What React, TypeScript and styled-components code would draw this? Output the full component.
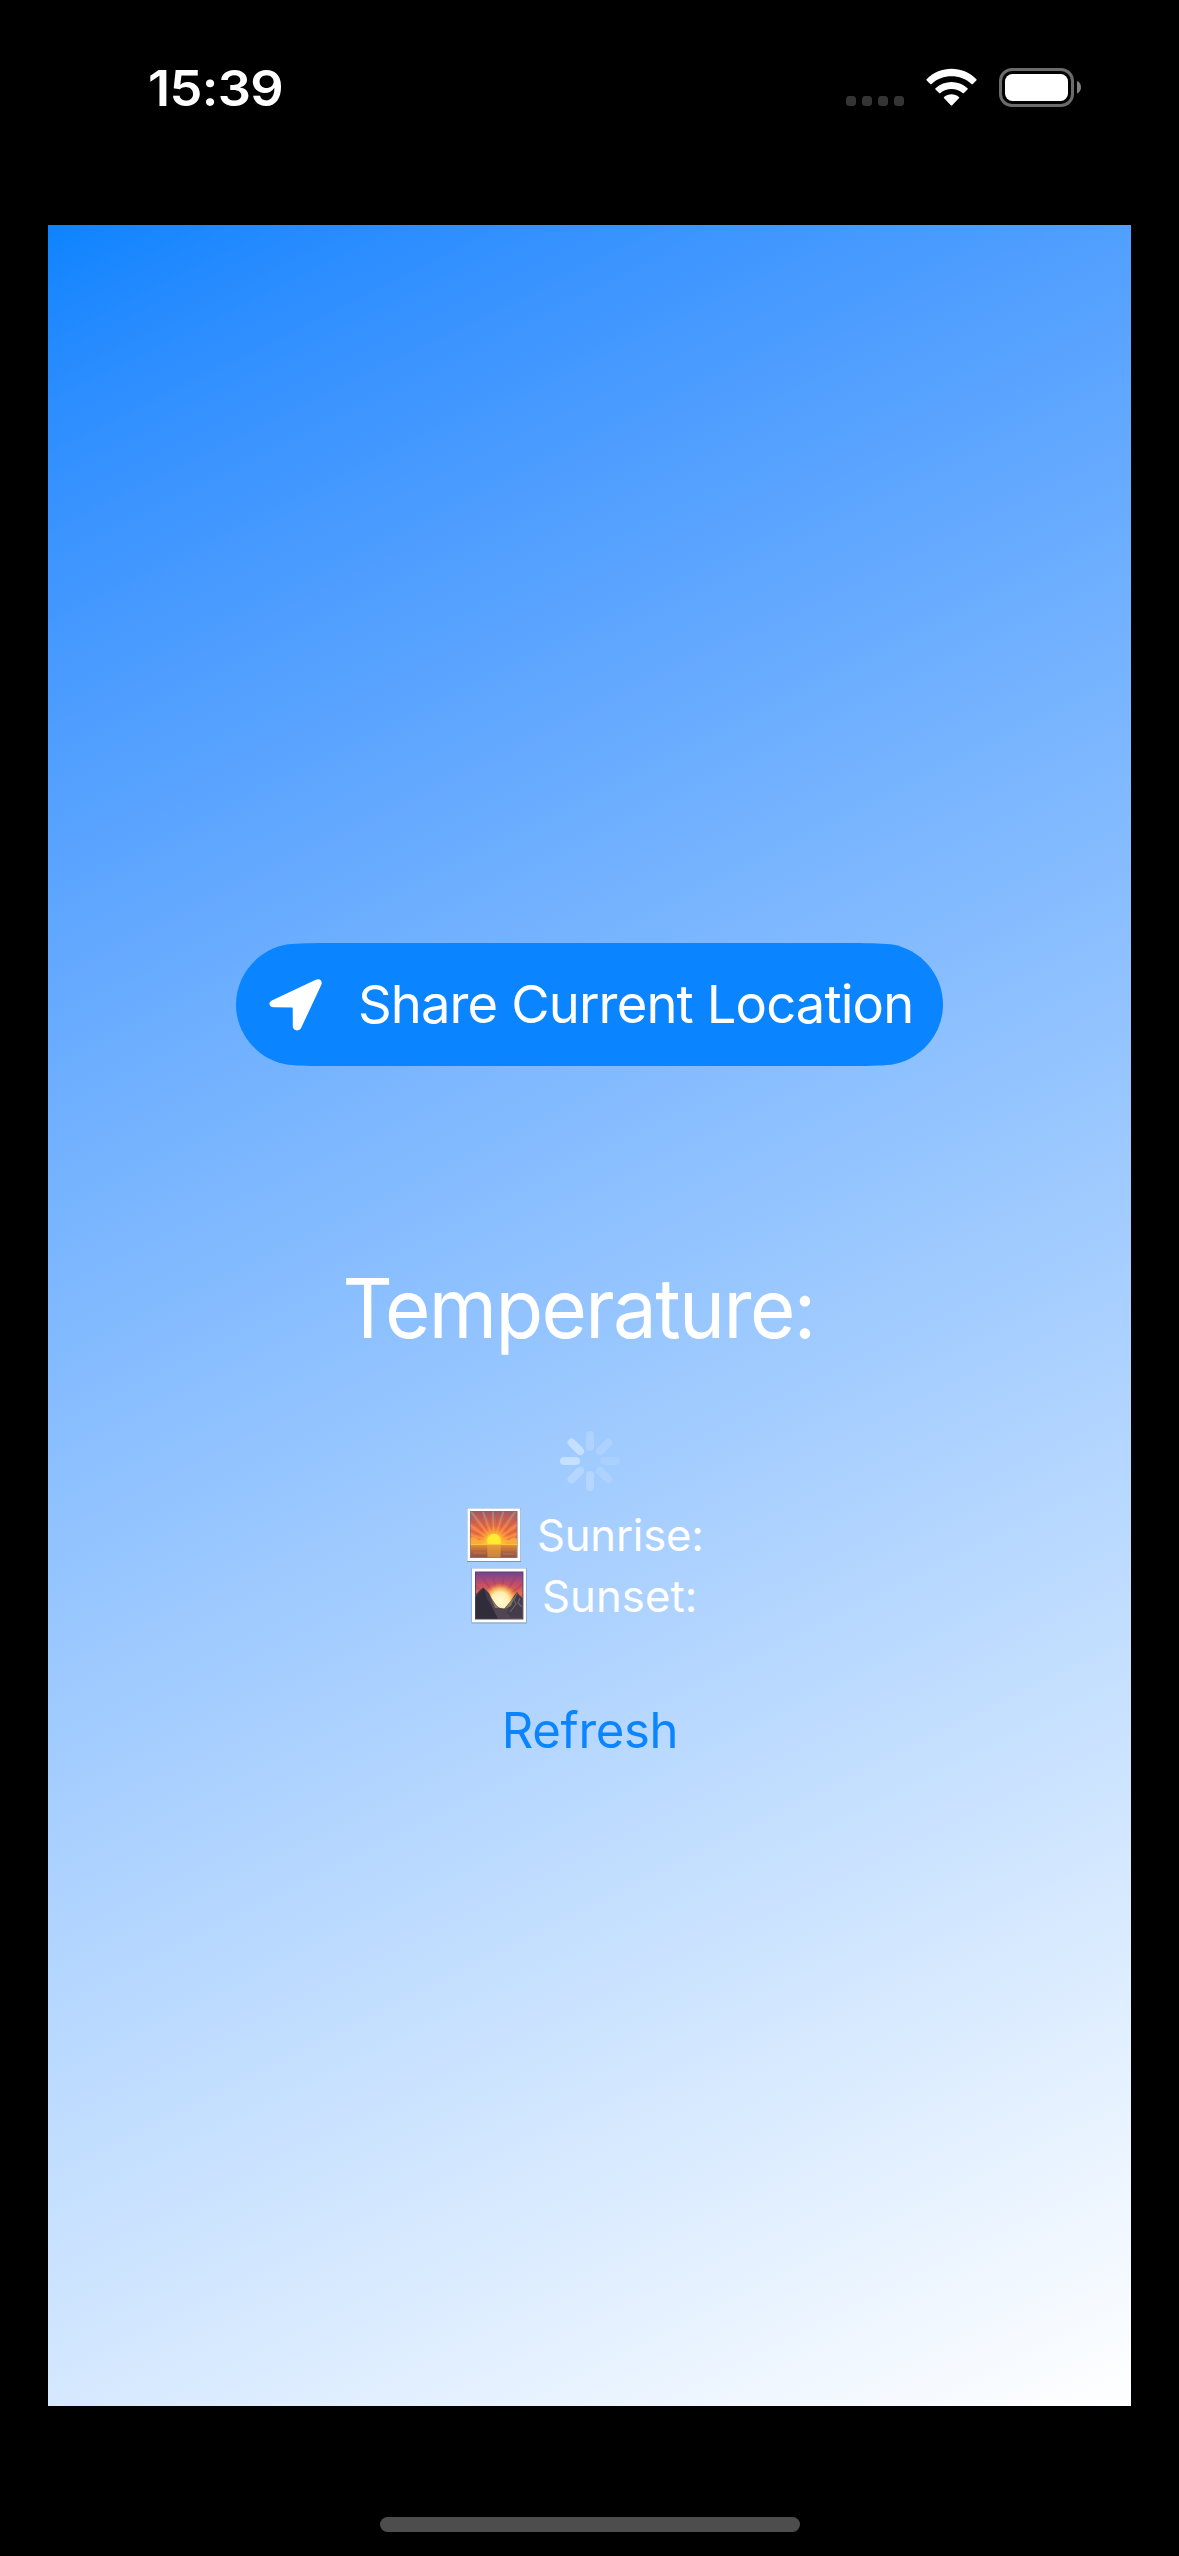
import React from "react";
import styled, { createGlobalStyle } from "styled-components";

const GlobalStyle = createGlobalStyle`
  * { box-sizing: border-box; }
  body { margin: 0; background: #000; }
`;

const Screen = styled.div`
  width: 1179px;
  height: 2556px;
  display: flex;
  flex-direction: column;
  align-items: center;
  background: #000;
  color: #fff;
  font-family: Inter, "Liberation Sans", sans-serif;
  overflow: hidden;
`;

const StatusBar = styled.header`
  width: 100%;
  height: 225px;
  padding: 58px 98px 0 148px;
  display: flex;
  justify-content: space-between;
  align-items: flex-start;
`;

const Clock = styled.time`
  font-size: 50px;
  font-weight: 600;
  line-height: 60px;
  letter-spacing: -0.6px;
  transform: scaleX(1.045);
  transform-origin: left center;
`;

const StatusIcons = styled.div`
  display: flex;
  align-items: flex-start;
  padding-top: 10px;
`;

const Dots = styled.div`
  display: flex;
  gap: 6px;
  padding-top: 28px;
  margin-right: 22px;
`;

const Dot = styled.span`
  width: 10px;
  height: 10px;
  border-radius: 3.5px;
  background: #343434;
`;

const WifiIcon = styled.svg`
  width: 51px;
  height: 39px;
  margin-right: 22px;
`;

const BatteryIcon = styled.svg`
  width: 82px;
  height: 39px;
`;

const Panel = styled.main`
  width: 1083px;
  height: 2181px;
  padding-top: 718px;
  display: flex;
  flex-direction: column;
  align-items: center;
  background: linear-gradient(153.594deg in oklab, #0a84ff, #ffffff);
`;

const ShareButton = styled.button`
  width: 707px;
  height: 123px;
  padding: 0 0 0 33px;
  border: 0;
  display: flex;
  align-items: center;
  background: #0a84ff;
  color: #fff;
  font-family: inherit;
  font-size: 52.5px;
  line-height: 64px;
  letter-spacing: -0.87px;
  white-space: nowrap;
  clip-path: path("M95 0 C78 0 62 .3 52 1.3 C22.5 5.8 0 31.5 0 61.5 C0 91.5 22.5 117.2 52 121.7 C62 122.7 78 123 95 123 H612 C629 123 645 122.7 655 121.7 C684.5 117.2 707 91.5 707 61.5 C707 31.5 684.5 5.8 655 1.3 C645 .3 629 0 612 0 Z");
`;

const ShareLabel = styled.span`
  padding-bottom: 2px;
`;

const ArrowIcon = styled.svg`
  width: 54px;
  height: 54px;
  margin-right: 35px;
  flex: none;
`;

const Temperature = styled.h1`
  margin: 193px 22px 0 0;
  font-size: 82px;
  font-weight: 400;
  line-height: 100px;
  letter-spacing: -1.7px;
  transform: scaleX(0.95);
`;

const Spinner = styled.svg`
  width: 60px;
  height: 60px;
  margin-top: 72px;
`;

const SunTimes = styled.section`
  margin-top: 14px;
  display: flex;
  flex-direction: column;
`;

const SunRow = styled.div<{ $indent: number; $tracking: number }>`
  height: 61px;
  display: flex;
  align-items: center;
  padding-left: ${(p) => p.$indent}px;
  width: 247px;
  font-size: 43.6px;
  line-height: 61px;
  letter-spacing: ${(p) => p.$tracking}px;
  white-space: nowrap;
`;

const SunPicture = styled.svg`
  width: 56px;
  height: 57px;
  flex: none;
  margin: 0 15px 2px 0;
`;

const Refresh = styled.button`
  height: 62px;
  margin: 73px 0 0 1px;
  padding: 0;
  border: 0;
  background: none;
  color: #0a84ff;
  font-family: inherit;
  font-size: 49px;
  line-height: 62px;
  letter-spacing: -0.3px;
`;

const HomeIndicator = styled.div`
  width: 420px;
  height: 15px;
  margin-top: 111px;
  border-radius: 8px;
  background: #4d4d4d;
`;

const spokeOpacities = [0.17, 0.14, 0.1, 0.13, 0.2, 0.22, 0.4, 0.4];

const sunriseRays = [-82, -64, -46, -29, -11, 8, 26, 44, 62, 81];
const sunsetRays = [-66, -44, -24, 0, 24, 44, 66];

function SunrisePicture() {
  return (
    <SunPicture viewBox="0 0 56 57" aria-hidden="true">
      <defs>
        <linearGradient id="riseSky" x1="0" y1="0" x2="0" y2="1">
          <stop offset="0" stopColor="#8a5c78" />
          <stop offset=".35" stopColor="#ea7548" />
          <stop offset="1" stopColor="#ff9a3a" />
        </linearGradient>
        <linearGradient id="riseSea" x1="0" y1="0" x2="0" y2="1">
          <stop offset="0" stopColor="#e69a35" />
          <stop offset=".5" stopColor="#b9673f" />
          <stop offset="1" stopColor="#8c5450" />
        </linearGradient>
        <radialGradient id="riseGlow">
          <stop offset="0" stopColor="#fff23a" />
          <stop offset=".4" stopColor="#ffd02e" stopOpacity=".9" />
          <stop offset="1" stopColor="#ff9a35" stopOpacity="0" />
        </radialGradient>
        <clipPath id="riseClip"><rect x="4.5" y="5.5" width="46.5" height="33" /></clipPath>
      </defs>
      <rect x="1" y="2" width="54" height="54" fill="#7897b8" />
      <rect x="1.4" y="2.4" width="53" height="52.6" fill="#fff" />
      <rect x="4" y="5" width="47.5" height="47" fill="#66708c" />
      <rect x="4.7" y="5.7" width="46" height="45.6" fill="url(#riseSky)" />
      <g clipPath="url(#riseClip)">
        {sunriseRays.map((a) => (
          <path key={a} d="M28 36 L26 -6 L30 -6 Z" fill="#dc4c3c" opacity=".55" transform={`rotate(${a} 28 36)`} />
        ))}
        {sunriseRays.map((a) => (
          <path key={a} d="M28 36 L26.4 -6 L29.6 -6 Z" fill="#ffb04c" opacity=".35" transform={`rotate(${a + 9} 28 36)`} />
        ))}
        <path d="M4 38 V32 Q9 30 13 34 Q18 33 21 37 H35 Q38 32 43 34 Q47 30 52 33 V38Z" fill="#ffb13c" opacity=".8" />
        <circle cx="28" cy="36" r="17" fill="url(#riseGlow)" />
        <circle cx="28" cy="34.5" r="6.8" fill="#ffeb2f" />
      </g>
      <rect x="4.7" y="38" width="46" height="13.3" fill="url(#riseSea)" />
      <path d="M21 38 H35 L34.5 51.3 H21.5Z" fill="#efa63a" opacity=".6" />
      <path d="M5 38.5 H51" stroke="#ffc23b" strokeWidth="1" />
      <path d="M5 43 H20 M36 44 H51 M7 47 H20 M37 48 H48" stroke="#cc7a3c" strokeWidth=".8" />
    </SunPicture>
  );
}

function SunsetPicture() {
  return (
    <SunPicture viewBox="0 0 56 57" aria-hidden="true">
      <defs>
        <linearGradient id="setSky" x1="0" y1="0" x2="0" y2="1">
          <stop offset="0" stopColor="#6f4596" />
          <stop offset=".25" stopColor="#c14d68" />
          <stop offset=".5" stopColor="#f0703f" />
          <stop offset="1" stopColor="#ffc069" />
        </linearGradient>
        <radialGradient id="setGlow">
          <stop offset="0" stopColor="#fffbd8" />
          <stop offset=".5" stopColor="#ffedac" />
          <stop offset=".72" stopColor="#ffc45a" stopOpacity=".8" />
          <stop offset="1" stopColor="#ff8740" stopOpacity="0" />
        </radialGradient>
        <clipPath id="setClip"><rect x="4.7" y="5.2" width="47" height="46.6" /></clipPath>
      </defs>
      <rect x=".6" y="1" width="55" height="55.4" fill="#7897b8" />
      <rect x="1" y="1.4" width="54" height="54" fill="#fff" />
      <rect x="4" y="4.5" width="48.4" height="48" fill="#4c4468" />
      <g clipPath="url(#setClip)">
        <rect x="4.7" y="5.2" width="47" height="46.6" fill="url(#setSky)" />
        {sunsetRays.map((a) => (
          <path key={a} d="M29 35 L26.8 -12 L31.2 -12 Z" fill="#983f70" opacity=".42" transform={`rotate(${a + 8} 29 35)`} />
        ))}
        <circle cx="29" cy="34" r="18" fill="url(#setGlow)" />
        <path d="M4 28 L9 23 L12 20.5 L15 23 L18 26 L21 32 L25 38 L29 41.5 L34 41.5 L39 35 L43 29 L46 25 L49 29 L52 31 V53 H4Z" fill="#443c49" />
        <path d="M18 28 L26 40 L33 42 L39 35 L36 46 L42 52 H27 L20 39Z" fill="#504550" />
        <path d="M4 31 L9 25 L13 21 L16 32 L21 40 L27 52 H4Z" fill="#302c39" />
        <path d="M19 28 L24 37 L28 41 L24 41Z M44 29 L38 36 L34 42 L40 39Z" fill="#b89970" opacity=".6" />
        <path d="M46 26 L43 33 L45 37 L39 45 M49 31 L47 36 L51 40" stroke="#686474" strokeWidth="1.2" fill="none" />
      </g>
    </SunPicture>
  );
}

export default function App() {
  return (
    <Screen>
      <GlobalStyle />
      <StatusBar>
        <Clock>15:39</Clock>
        <StatusIcons>
          <Dots>
            <Dot />
            <Dot />
            <Dot />
            <Dot />
          </Dots>
          <WifiIcon viewBox="0 0 51 39" fill="#fff" aria-hidden="true">
            <path d="M.6 11.2 Q0 11.8 .7 12.4 L4.2 16 Q4.8 16.6 5.5 16 C16.5 5.7 34.5 5.7 45.5 16 Q46.2 16.6 46.8 16 L50.3 12.4 Q51 11.8 50.4 11.2 C36.5 -2.7 14.5 -2.7 .6 11.2Z" />
            <path d="M9.5 20.2 Q8.9 20.8 9.5 21.4 L13.1 25 Q13.7 25.6 14.4 25 C20.6 19.5 30.4 19.5 36.6 25 Q37.3 25.6 37.9 25 L41.5 21.4 Q42.1 20.8 41.5 20.2 C32.6 11.8 18.4 11.8 9.5 20.2Z" />
            <path d="M18.1 28.9 Q17.4 29.5 18.1 30.2 L24.8 37.2 Q25.5 38 26.2 37.2 L32.9 30.2 Q33.6 29.5 32.9 28.9 C28.7 25.3 22.3 25.3 18.1 28.9Z" />
          </WifiIcon>
          <BatteryIcon viewBox="0 0 82 39" aria-hidden="true">
            <rect x="1.5" y="1.5" width="72" height="36" rx="11.5" fill="none" stroke="#6b6b6b" strokeWidth="3" />
            <rect x="6" y="6" width="63" height="27" rx="7.5" fill="#fff" />
            <path d="M78 13 C80.8 14.2 82 16.5 82 19.3 S80.8 24.4 78 25.6Z" fill="#808080" />
          </BatteryIcon>
        </StatusIcons>
      </StatusBar>

      <Panel>
        <ShareButton>
          <ArrowIcon viewBox="0 0 54 54" aria-hidden="true">
            <path
              d="M2.8 22.6 L46.8 1.8 C50.8 -.1 54 2.9 52.2 6.9 L32.2 49.8 C30.3 53.8 23.8 53.1 23.8 48.3 L23.7 30 Q23.7 29.4 23.1 29.4 L4.9 29.3 C0 29.3 -1.1 24.4 2.8 22.6Z"
              fill="#fff"
            />
          </ArrowIcon>
          <ShareLabel>Share Current Location</ShareLabel>
        </ShareButton>
        <Temperature>Temperature:</Temperature>
        <Spinner viewBox="0 0 60 60" aria-label="Loading">
          {spokeOpacities.map((opacity, i) => (
            <rect key={i} x="26" y="0" width="8" height="20" rx="4" fill="#fff" opacity={opacity} transform={`rotate(${i * 45} 30 30)`} />
          ))}
        </Spinner>
        <SunTimes>
          <SunRow $indent={0} $tracking={-0.2}>
            <SunrisePicture />
            Sunrise:
          </SunRow>
          <SunRow $indent={5} $tracking={0.1}>
            <SunsetPicture />
            Sunset:
          </SunRow>
        </SunTimes>
        <Refresh>Refresh</Refresh>
      </Panel>
      <HomeIndicator />
    </Screen>
  );
}
